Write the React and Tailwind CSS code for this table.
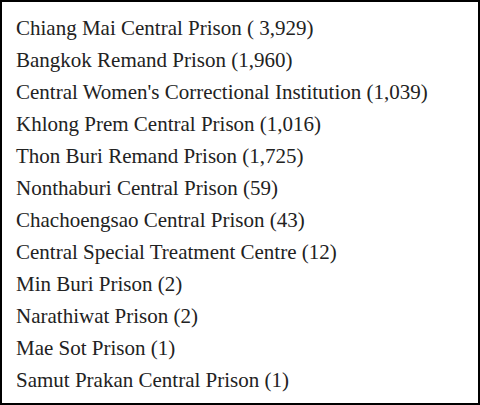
const prisons = [
  'Chiang Mai Central Prison ( 3,929)',
  'Bangkok Remand Prison (1,960)',
  "Central Women's Correctional Institution (1,039)",
  'Khlong Prem Central Prison (1,016)',
  'Thon Buri Remand Prison (1,725)',
  'Nonthaburi Central Prison (59)',
  'Chachoengsao Central Prison (43)',
  'Central Special Treatment Centre (12)',
  'Min Buri Prison (2)',
  'Narathiwat Prison (2)',
  'Mae Sot Prison (1)',
  'Samut Prakan Central Prison (1)',
];

export default function App() {
  return (
    <div className="w-[480px] h-[405px] border-2 border-black bg-white pl-[14px] pt-[10px] font-['Liberation_Serif',serif] text-[21px] leading-[32px] text-[#222]">
      {prisons.map((name, i) => (
        <div key={i}>{name}</div>
      ))}
    </div>
  );
}
